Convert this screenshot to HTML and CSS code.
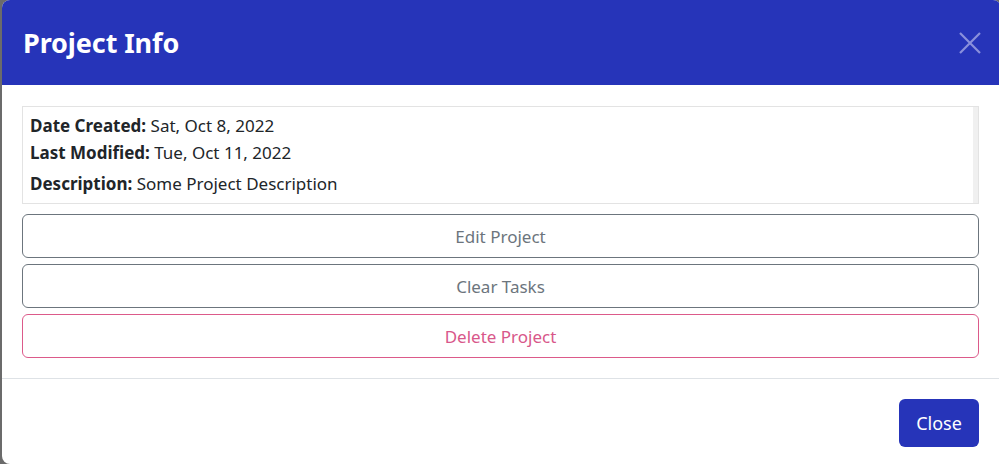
FILE: index.html
```html
<!DOCTYPE html>
<html>
<head>
<meta charset="utf-8">
<link rel="stylesheet" href="styles.css">
</head>
<body>
<div class="backdrop">
  <div class="modal">
    <div class="modal-header">
      <h1 class="title">Project Info</h1>
      <button class="close-x" aria-label="Close">
        <svg width="22" height="22" viewBox="0 0 22 22"><path d="M1 1 L21 21 M21 1 L1 21" stroke="#8a90dc" stroke-width="2.2" fill="none"/></svg>
      </button>
    </div>
    <div class="modal-body">
      <div class="info">
        <div class="info-text">
          <div class="line"><b>Date Created:</b> Sat, Oct 8, 2022</div>
          <div class="line"><b>Last Modified:</b> Tue, Oct 11, 2022</div>
          <div class="line desc"><b>Description:</b> Some Project Description</div>
        </div>
        <div class="scrollbar"></div>
      </div>
      <button class="btn btn-gray">Edit Project</button>
      <button class="btn btn-gray">Clear Tasks</button>
      <button class="btn btn-pink">Delete Project</button>
    </div>
    <div class="modal-footer">
      <button class="btn-close">Close</button>
    </div>
  </div>
</div>
</body>
</html>
```
FILE: styles.css
```css
html, body {
  margin: 0;
  padding: 0;
  height: 100%;
}
body {
  font-family: "Noto Sans", "Open Sans", sans-serif;
  background: #6b6b6b;
  overflow: hidden;
}
.backdrop {
  height: 464px;
  padding-left: 2px;
  background: #6b6b6b;
}
.modal {
  width: 999px;
  height: 464px;
  background: #fff;
  border-radius: 8px 8px 0 8px;
  overflow: hidden;
  display: flex;
  flex-direction: column;
}
.modal-header {
  height: 85px;
  background: #2634b9;
  display: flex;
  align-items: center;
  justify-content: space-between;
  padding: 0 20px 0 21px;
  box-sizing: border-box;
}
.title {
  margin: 0;
  color: #fff;
  font-size: 27px;
  font-weight: 700;
  letter-spacing: -0.1px;
}
.close-x {
  background: none;
  border: 0;
  padding: 0;
  width: 22px;
  height: 22px;
  cursor: pointer;
}
.modal-body {
  padding: 21px 22px 20px 20px;
  display: flex;
  flex-direction: column;
  gap: 6px;
  border-bottom: 1px solid #dee2e6;
}
.info {
  border: 1px solid #e3e3e3;
  height: 98px;
  box-sizing: border-box;
  display: flex;
  margin-bottom: 4px;
}
.info-text {
  flex: 1;
  padding: 8px 7px;
  font-size: 17px;
  color: #212529;
}
.line {
  height: 27px;
  line-height: 22px;
}
.line b { font-weight: 700; }
.line.desc { margin-top: 4px; }
.scrollbar {
  width: 5px;
  background: #f0f0f0;
}
.btn {
  height: 44px;
  background: #fff;
  border-radius: 6px;
  font-family: inherit;
  font-size: 17px;
  cursor: pointer;
  padding: 0;
}
.btn-gray {
  border: 1px solid #6c757d;
  color: #6c757d;
}
.btn-pink {
  border: 1px solid #dc5a8a;
  color: #d8578a;
}
.modal-footer {
  flex: 1;
  display: flex;
  justify-content: flex-end;
  align-items: flex-start;
  padding: 20px 22px 0 0;
}
.btn-close {
  width: 80px;
  height: 48px;
  background: #2634b9;
  color: #fff;
  border: 0;
  border-radius: 6px;
  font-family: inherit;
  font-size: 18px;
  cursor: pointer;
}
```
